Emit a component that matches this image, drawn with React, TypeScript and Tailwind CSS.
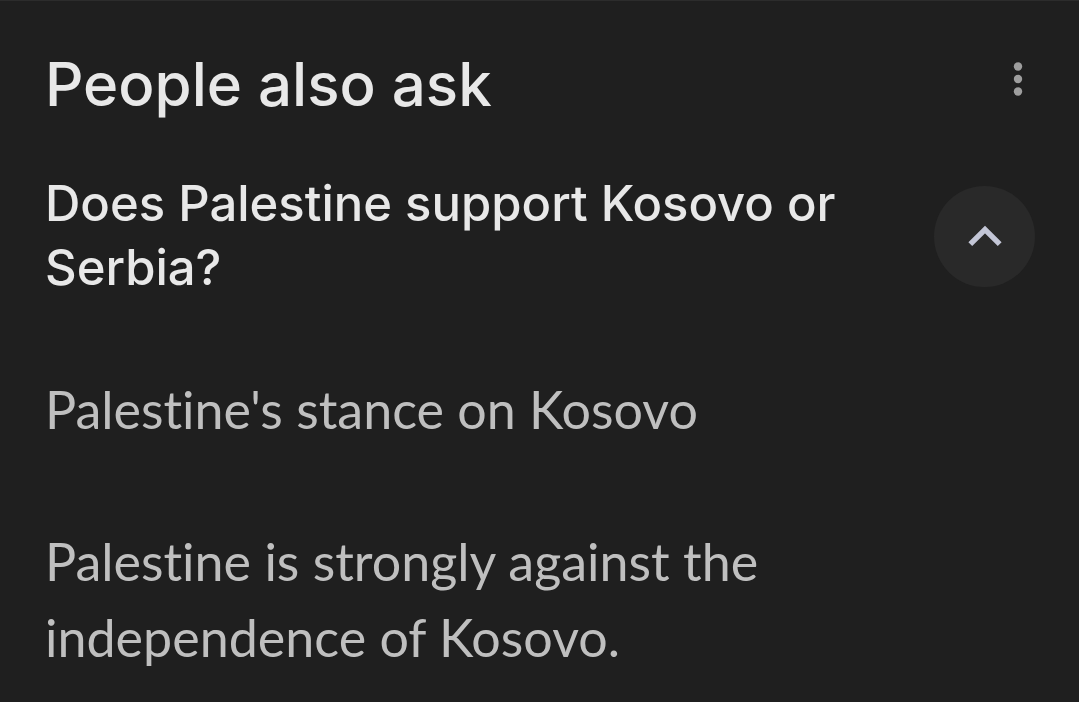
import { useState } from 'react';

interface Question {
  id: string;
  question: string;
  heading: string;
  answer: string;
}

const questions: Question[] = [
  {
    id: 'kosovo-serbia',
    question: 'Does Palestine support Kosovo or Serbia?',
    heading: "Palestine's stance on Kosovo",
    answer: 'Palestine is strongly against the independence of Kosovo.',
  },
];

const MoreIcon = () => (
  <svg viewBox="0 0 10 34" className="h-[34px] w-[10px]" fill="currentColor" aria-hidden="true">
    <circle cx="5" cy="4.5" r="4.2" />
    <circle cx="5" cy="17" r="4.2" />
    <circle cx="5" cy="29.5" r="4.2" />
  </svg>
);

const ChevronIcon = ({ open }: { open: boolean }) => (
  <svg
    viewBox="0 0 34 22"
    className={open ? 'h-[22px] w-[34px]' : 'h-[22px] w-[34px] rotate-180'}
    fill="none"
    stroke="currentColor"
    strokeWidth="5.4"
    aria-hidden="true"
  >
    <path d="M2.3 19.2 17 4.5 31.7 19.2" />
  </svg>
);

const QuestionItem = ({ item }: { item: Question }) => {
  const [open, setOpen] = useState(true);

  return (
    <section>
      <div className="flex items-center justify-between">
        <h2 id={item.id} className="max-w-[850px] font-['Inter',sans-serif] text-[49px] leading-[64px] font-medium text-[#e8e8e8]">
          {item.question}
        </h2>
        <button
          type="button"
          aria-expanded={open}
          aria-labelledby={item.id}
          onClick={() => setOpen(!open)}
          className="flex size-[101px] shrink-0 items-center justify-center rounded-full bg-[#292929] text-[#c3c6d6]"
        >
          <ChevronIcon open={open} />
        </button>
      </div>
      {open && (
        <div className="mt-[71px] text-[52px] leading-[76px] text-[#bfbfbf]">
          <p>{item.heading}</p>
          <p className="mt-[76px] max-w-[850px]">{item.answer}</p>
        </div>
      )}
    </section>
  );
};

export default function App() {
  return (
    <main className="min-h-screen border-t border-[#2c2c2c] bg-[#1f1f1f] pr-11 pl-[45px] font-['Lato',sans-serif] [font-variant-ligatures:none]">
      <header className="flex items-start justify-between pt-[37px] pr-[12px] pb-[42px]">
        <h1 className="font-['Inter',sans-serif] text-[60px] leading-[92px] font-medium text-[#e8e8e8]">People also ask</h1>
        <button type="button" aria-label="More options" className="mt-6 text-[#9e9e9e]">
          <MoreIcon />
        </button>
      </header>
      {questions.map((item) => (
        <QuestionItem key={item.id} item={item} />
      ))}
    </main>
  );
}
